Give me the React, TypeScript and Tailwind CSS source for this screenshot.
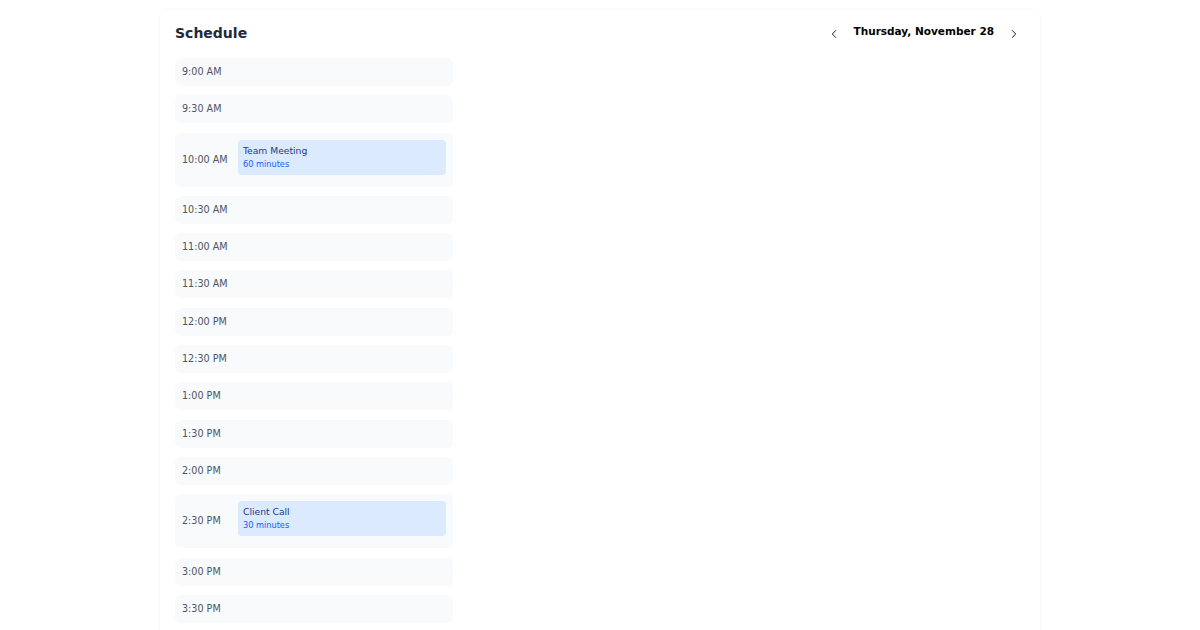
import React from 'react';
import { ChevronLeft, ChevronRight } from 'lucide-react';

type Slot = {
  time: string;
  event?: { title: string; duration: number };
};

const slots: Slot[] = [
  { time: '9:00 AM' },
  { time: '9:30 AM' },
  { time: '10:00 AM', event: { title: 'Team Meeting', duration: 60 } },
  { time: '10:30 AM' },
  { time: '11:00 AM' },
  { time: '11:30 AM' },
  { time: '12:00 PM' },
  { time: '12:30 PM' },
  { time: '1:00 PM' },
  { time: '1:30 PM' },
  { time: '2:00 PM' },
  { time: '2:30 PM', event: { title: 'Client Call', duration: 30 } },
  { time: '3:00 PM' },
  { time: '3:30 PM' },
];

export default function App() {
  return (
    <div
      className="min-h-screen bg-white pt-2.5"
      style={{ fontFamily: '"DejaVu Sans", sans-serif' }}
    >
      <div className="mx-auto w-[880px] rounded-lg bg-white px-[15px] pt-[13px] pb-4 shadow-[0_1px_4px_rgba(0,0,0,0.06)]">
        {/* 头部 */}
        <div className="flex items-start justify-between mb-[13px]">
          <h1 className="text-[14px] leading-5 font-bold text-gray-800">Schedule</h1>
          <div className="flex items-center gap-[9px]">
            <button className="p-1 text-black">
              <ChevronLeft className="w-[14px] h-[14px]" strokeWidth={1.5} />
            </button>
            <span className="mb-[5px] text-[10.5px] font-bold text-black">Thursday, November 28</span>
            <button className="p-1 text-black">
              <ChevronRight className="w-[14px] h-[14px]" strokeWidth={1.5} />
            </button>
          </div>
        </div>

        <div className="grid grid-cols-3 gap-2">
          <div className="flex flex-col gap-[9.3px]">
            {slots.map(slot => (
              <div
                key={slot.time}
                className={`flex items-center rounded-md bg-gray-50 pl-[7px] pr-[7px] ${
                  slot.event ? 'pt-[7px] pb-[7px]' : 'py-1.5'
                }`}
              >
                <span className="w-[56px] shrink-0 text-[9.6px] leading-4 text-gray-600">
                  {slot.time}
                </span>
                {slot.event && (
                  <div className="flex-1 mb-[5px] rounded bg-blue-100 px-[5px] pt-[4px] pb-[4px]">
                    <p className="text-[9.2px] leading-[14px] text-blue-900">{slot.event.title}</p>
                    <p className="text-[8.2px] leading-[13px] text-blue-600">
                      {slot.event.duration} minutes
                    </p>
                  </div>
                )}
              </div>
            ))}
          </div>
        </div>
      </div>
    </div>
  );
}
